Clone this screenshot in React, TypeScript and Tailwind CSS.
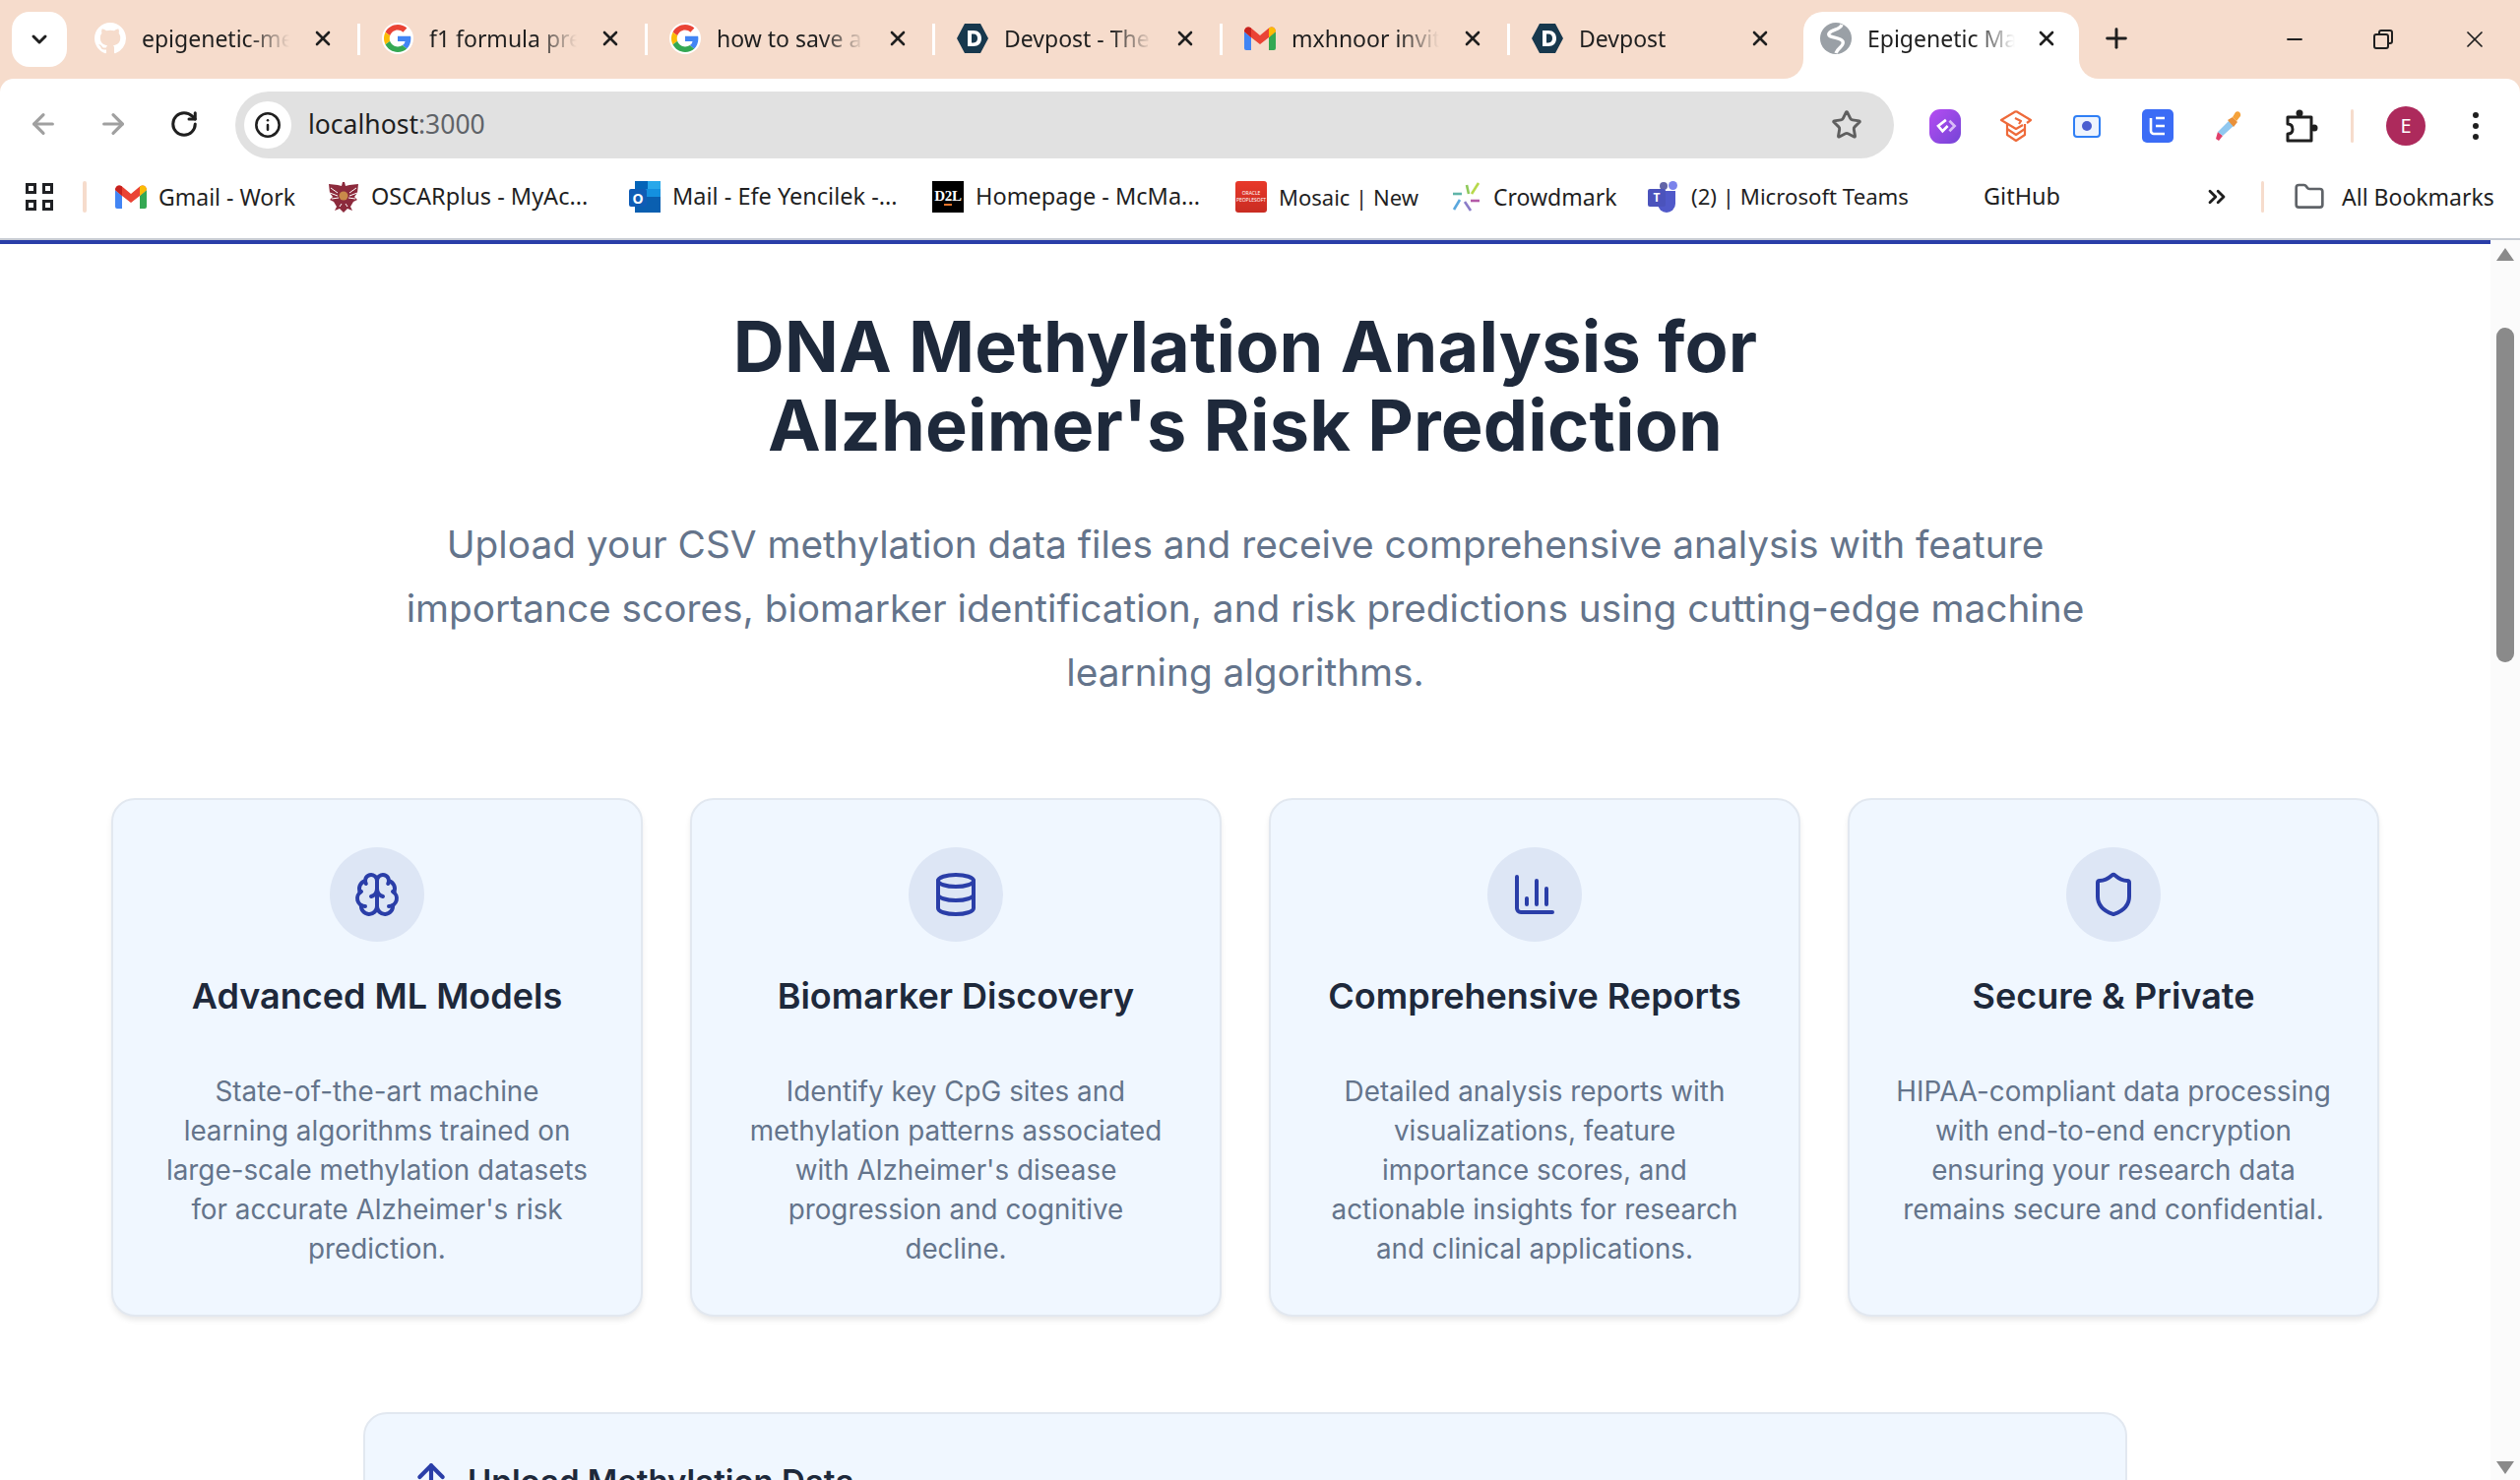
import React from "react";
import { Brain, Database, BarChart3, Shield, ArrowUp, ArrowLeft, ArrowRight, RotateCw, Info, Star, X, Plus, Minus, ChevronDown, ChevronsRight, Folder } from "lucide-react";

const chrome = { fontFamily: '"Noto Sans", sans-serif' };

function GitHubMark() {
  return (
    <svg viewBox="0 0 16 16" className="w-8 h-8" fill="#ffffff">
      <path d="M8 0C3.58 0 0 3.58 0 8c0 3.54 2.29 6.53 5.47 7.59.4.07.55-.17.55-.38 0-.19-.01-.82-.01-1.49-2.01.37-2.53-.49-2.69-.94-.09-.23-.48-.94-.82-1.13-.28-.15-.68-.52-.01-.53.63-.01 1.08.58 1.23.82.72 1.21 1.87.87 2.33.66.07-.52.28-.87.51-1.07-1.78-.2-3.64-.89-3.64-3.95 0-.87.31-1.59.82-2.15-.08-.2-.36-1.02.08-2.12 0 0 .67-.21 2.2.82.64-.18 1.32-.27 2-.27s1.36.09 2 .27c1.53-1.04 2.2-.82 2.2-.82.44 1.1.16 1.92.08 2.12.51.56.82 1.27.82 2.15 0 3.07-1.87 3.75-3.65 3.95.29.25.54.73.54 1.48 0 1.07-.01 1.93-.01 2.2 0 .21.15.46.55.38A8.01 8.01 0 0 0 16 8c0-4.42-3.58-8-8-8z" />
    </svg>
  );
}

function GoogleG() {
  return (
    <div className="w-8 h-8 rounded-full bg-white flex items-center justify-center">
      <svg viewBox="0 0 48 48" className="w-7 h-7">
        <path fill="#EA4335" d="M24 9.5c3.5 0 6.7 1.2 9.2 3.6l6.9-6.9C35.9 2.4 30.4 0 24 0 14.6 0 6.5 5.4 2.6 13.2l8 6.2C12.5 13.6 17.8 9.5 24 9.5z" />
        <path fill="#4285F4" d="M46.9 24.5c0-1.6-.1-3.1-.4-4.5H24v9h12.9c-.6 3-2.2 5.5-4.7 7.2l7.7 6c4.5-4.2 7-10.3 7-17.7z" />
        <path fill="#FBBC05" d="M10.6 28.6c-.5-1.4-.8-3-.8-4.6s.3-3.2.8-4.6l-8-6.2C.9 16.5 0 20.1 0 24s.9 7.5 2.6 10.8l8-6.2z" />
        <path fill="#34A853" d="M24 48c6.5 0 11.9-2.1 15.9-5.8l-7.7-6c-2.1 1.4-4.9 2.3-8.2 2.3-6.2 0-11.5-4.2-13.4-9.8l-8 6.2C6.5 42.6 14.6 48 24 48z" />
      </svg>
    </div>
  );
}

function DevpostIcon() {
  return (
    <svg viewBox="0 0 32 32" className="w-8 h-8">
      <path fill="#17384d" d="M8 1h16l8 15-8 15H8L0 16z" />
      <path fill="#ffffff" d="M11 8h6c5 0 8 3 8 8s-3 8-8 8h-6zm4 3.6v8.8h2c2.6 0 4-1.700 4-4.400s-1.400-4.400-4-4.400z" />
    </svg>
  );
}

function GmailIcon() {
  return (
    <svg viewBox="0 0 32 24" className="w-8 h-6">
      <path fill="#4285F4" d="M0 5v17a2 2 0 0 0 2 2h5V11z" />
      <path fill="#34A853" d="M32 5v17a2 2 0 0 1-2 2h-5V11z" />
      <path fill="#EA4335" d="M0 5c0-4 4-6 7-3.5L16 9l9-7.5C28-1 32 1 32 5l-7 6-9 7-9-7z" />
      <path fill="#C5221F" d="M0 5c0-4 4-6 7-3.5V11z" />
      <path fill="#FBBC04" d="M32 5c0-4-4-6-7-3.5V11z" />
    </svg>
  );
}

function DefaultFavicon() {
  return (
    <svg viewBox="0 0 32 32" className="w-8 h-8 shrink-0">
      <circle cx="16" cy="16" r="16" fill="#9aa0a6" />
      <path d="M22 2C20 8 12 6 9 11c-2 5 11 3 14 8 2 5-5 6-7 12" fill="none" stroke="#ffffff" strokeWidth="3.4" />
    </svg>
  );
}

function Tab({ icon, title, sep = true }: { icon: React.ReactNode; title: string; sep?: boolean }) {
  return (
    <div className="flex items-center w-[292px] h-[68px] pb-[14px] relative shrink-0">
      <div className="w-8 h-8 ml-[16px] flex items-center justify-center shrink-0">{icon}</div>
      <span className="ml-[16px] w-[150px] whitespace-nowrap overflow-hidden text-[23px] text-[#1f1f1f] [mask-image:linear-gradient(to_right,black_72%,transparent)]">{title}</span>
      <X className="absolute left-[236px] w-6 h-6 text-[#1f1f1f]" strokeWidth={2.6} />
      {sep && <div className="absolute right-[6px] top-[12px] w-[3px] h-[32px] bg-white" />}
    </div>
  );
}

function TabStrip() {
  return (
    <div className="h-[80px] bg-[#f6dccc] flex items-end relative shrink-0">
      <div className="absolute left-[12px] top-[12px] w-[56px] h-[56px] rounded-[18px] bg-white flex items-center justify-center">
        <ChevronDown className="w-6 h-6 text-[#1f1f1f]" strokeWidth={3} />
      </div>
      <div className="flex items-start h-[68px] pl-[80px]">
        <Tab icon={<GitHubMark />} title="epigenetic-methylation" />
        <Tab icon={<GoogleG />} title="f1 formula prediction" />
        <Tab icon={<GoogleG />} title="how to save a file" />
        <Tab icon={<DevpostIcon />} title="Devpost - The home" />
        <Tab icon={<GmailIcon />} title="mxhnoor invited you" />
        <Tab icon={<DevpostIcon />} title="Devpost" sep={false} />
        <div className="w-[280px] h-[68px] bg-white rounded-t-[20px] relative flex items-center pb-[14px] shrink-0">
          <div className="absolute -left-[20px] bottom-0 w-5 h-5 bg-white"><div className="w-full h-full bg-[#f6dccc] rounded-br-[20px]" /></div>
          <div className="absolute -right-[20px] bottom-0 w-5 h-5 bg-white"><div className="w-full h-full bg-[#f6dccc] rounded-bl-[20px]" /></div>
          <div className="ml-[17px]"><DefaultFavicon /></div>
          <span className="ml-[16px] w-[150px] whitespace-nowrap overflow-hidden text-[23px] text-[#1f1f1f] [mask-image:linear-gradient(to_right,black_72%,transparent)]">Epigenetic Marker</span>
          <X className="absolute left-[235px] w-6 h-6 text-[#1f1f1f]" strokeWidth={2.6} />
        </div>
        <Plus className="ml-[22px] mt-[11px] w-8 h-8 text-[#1f1f1f]" strokeWidth={2.2} />
      </div>
      <div className="absolute left-[2319px] top-0 h-[80px] flex items-center">
        <Minus className="w-6 h-6 text-[#1f1f1f]" strokeWidth={1.8} />
        <div className="relative w-5 h-5 ml-[68px]">
          <div className="absolute left-[5px] top-0 w-[15px] h-[15px] border-[2px] border-[#1f1f1f] rounded-[3px]" />
          <div className="absolute left-0 top-[4px] w-[16px] h-[16px] border-[2px] border-[#1f1f1f] rounded-[3px] bg-[#f6dccc]" />
        </div>
        <X className="w-7 h-7 text-[#1f1f1f] ml-[69px]" strokeWidth={1.5} />
      </div>
    </div>
  );
}

function Toolbar() {
  return (
    <div className="h-[81px] bg-white flex items-center shrink-0 relative rounded-t-[14px]">
      <ArrowLeft className="ml-[28px] mt-[11px] w-8 h-8 text-[#a0a0a0]" strokeWidth={2.4} />
      <ArrowRight className="ml-[39px] mt-[11px] w-8 h-8 text-[#a0a0a0]" strokeWidth={2.4} />
      <RotateCw className="ml-[41px] mt-[11px] w-[30px] h-[30px] text-[#1f1f1f]" strokeWidth={2.4} />
      <div className="ml-[37px] w-[1685px] h-[68px] rounded-[34px] bg-[#e1e1e1] flex items-center mt-[12px] relative">
        <div className="ml-[9px] w-[48px] h-[48px] rounded-full bg-white flex items-center justify-center">
          <Info className="w-7 h-7 text-[#1f1f1f]" strokeWidth={2.2} />
        </div>
        <span className="ml-[17px] text-[26.5px] text-[#1f1f1f]">localhost<span className="text-[#5f6368]">:3000</span></span>
        <Star className="absolute right-[32px] w-8 h-8 text-[#5f5f5f]" strokeWidth={2.2} />
      </div>
      <div className="absolute left-[1960px] top-[14px] h-[68px] w-[600px] flex items-center">
        <div className="absolute left-0 w-8 h-[35px] rounded-[11px] bg-gradient-to-br from-[#b64cf2] to-[#7444d6] flex items-center justify-center">
          <svg viewBox="0 0 32 32" className="w-7 h-7" fill="none" strokeWidth={3}>
            <path d="M17 9l-9 7 5 6 6-6" stroke="#ffffff" />
            <path d="M21 10l6 6-6 6" stroke="#d8bdf7" />
          </svg>
        </div>
        <svg viewBox="0 0 34 32" className="absolute left-[71px] w-[34px] h-8" fill="none" stroke="#ee6a3a" strokeWidth={2.2} strokeLinejoin="round">
          <path d="M17 1L32 10l-4 3M17 1L2 10l15 9 7-4" />
          <path d="M8 14v11l9 6 9-6V14" />
          <path d="M8 19l9 6 9-6M16 8l6 3-2 3" />
        </svg>
        <div className="absolute left-[146px] w-[28px] h-[23px] rounded-[4px] border-[2.5px] border-[#2f7ff5] bg-[#eef4fe] flex items-center justify-center">
          <div className="w-[10px] h-[10px] rounded-full bg-[#4a5ed0]" />
        </div>
        <div className="absolute left-[216px] w-8 h-[34px] rounded-[5px] bg-[#3b6cf6] flex items-center justify-center">
          <svg viewBox="0 0 32 34" className="w-8 h-[34px]" fill="none" stroke="#ffffff" strokeWidth={2.6}>
            <path d="M9 9v13a3 3 0 0 0 3 3h11" />
            <path d="M14 9h9M14 17h9" />
          </svg>
        </div>
        <svg viewBox="0 0 26 30" className="absolute left-[291px] w-[26px] h-[30px]">
          <path d="M0 28l2-7 5 4-4 5z" fill="#e0406a" />
          <path d="M2 21L14 9l5 5L7 25z" fill="#90c8f0" />
          <path d="M12 9l5-3 5 5-4 5z" fill="#e8903a" />
          <path d="M17 6l3-5c3-2 6 1 5 4l-4 5z" fill="#f5a23a" />
        </svg>
        <svg viewBox="0 0 34 36" className="absolute left-[361px] w-[34px] h-[36px]" fill="none" stroke="#1f1f1f" strokeWidth={3} strokeLinejoin="round">
          <path d="M3 9h24v9c0 0 0 6 0 6v9H3v-7c4 0 5-2 5-4.5S7 16 3 16z" />
          <circle cx="15" cy="5" r="3.5" fill="#1f1f1f" stroke="none" />
          <circle cx="30" cy="20" r="3.5" fill="#1f1f1f" stroke="none" />
        </svg>
        <div className="absolute left-[428px] w-[3px] h-[34px] rounded-full bg-[#f6dccc]" />
        <div className="absolute left-[464px] w-[40px] h-[40px] rounded-full bg-[#ad2a5c] text-white text-[20px] flex items-center justify-center">E</div>
        <div className="absolute left-[552px] flex flex-col gap-[5px]">
          <div className="w-[6px] h-[6px] rounded-full bg-[#1f1f1f]" />
          <div className="w-[6px] h-[6px] rounded-full bg-[#1f1f1f]" />
          <div className="w-[6px] h-[6px] rounded-full bg-[#1f1f1f]" />
        </div>
      </div>
    </div>
  );
}

function Bookmark({ icon, label, ml, w, size }: { icon: React.ReactNode; label: string; ml: number; w: number; size: string }) {
  return (
    <div className="flex items-center shrink-0" style={{ marginLeft: ml }}>
      <div className="w-8 h-8 flex items-center justify-center mr-[12px]">{icon}</div>
      <span className={`${size} text-[#1f1f1f] whitespace-nowrap`} style={{ width: w }}>{label}</span>
    </div>
  );
}

function GridIcon() {
  return (
    <div className="ml-[26px] w-[28px] h-[28px] grid grid-cols-2 gap-[6px]">
      <div className="border-[3px] border-[#202124]" />
      <div className="border-[3px] border-[#202124]" />
      <div className="border-[3px] border-[#202124]" />
      <div className="border-[3px] border-[#202124]" />
    </div>
  );
}

function BookmarksBar() {
  return (
    <div className="h-[81px] pb-[3px] bg-white flex items-center shrink-0 relative">
      <GridIcon />
      <div className="ml-[30px] w-[4px] h-[32px] rounded-full bg-[#f6dccc]" />
      <Bookmark ml={29} w={140} size="text-[23px]" icon={<GmailIcon />} label="Gmail - Work" />
      <Bookmark ml={32} w={220} size="text-[23.5px]" icon={
        <svg viewBox="0 0 32 32" className="w-8 h-8">
          <path fill="#8c2a3c" d="M15 1h2l1 4 4-1 9-1-1 9-3 4 3 3-4 2-3 5 2 4-5-2-4 4-4-4-5 2 2-4-3-5-4-2 3-3-3-4-1-9 9 1 4 1z" />
          <path stroke="#ffffff" strokeWidth="1" d="M3 7l7 5M2 12l8 3M4 18l7-1M29 7l-7 5M30 12l-8 3M28 18l-7-1M12 26l2-3M20 26l-2-3" />
          <circle cx="16" cy="15" r="4.5" fill="#c98a4a" />
        </svg>
      } label="OSCARplus - MyAc..." />
      <Bookmark ml={42} w={225} size="text-[23.5px]" icon={
        <div className="relative w-8 h-8">
          <div className="absolute left-[6px] top-0 w-[26px] h-[16px] bg-[#1490df]" />
          <div className="absolute left-[6px] top-0 w-[13px] h-[8px] bg-[#0364b8]" />
          <div className="absolute left-[19px] top-0 w-[13px] h-[8px] bg-[#28a8ea]" />
          <div className="absolute left-[6px] top-[16px] w-[26px] h-[16px] bg-[#0a5fb0]" />
          <div className="absolute left-0 top-[8px] w-[18px] h-[18px] rounded-[2px] bg-[#0f5cb5] text-white text-[14px] font-bold flex items-center justify-center">O</div>
        </div>
      } label="Mail - Efe Yencilek -..." />
      <Bookmark ml={39} w={226} size="text-[23.5px]" icon={
        <div className="w-8 h-8 bg-black text-white flex flex-col items-center justify-center relative" style={{ fontFamily: '"Liberation Serif", serif' }}>
          <span className="text-[15px] leading-[16px] font-bold tracking-[-0.02em]">D2L</span>
          <div className="w-[8px] h-[2px] bg-[#e8762c]" />
        </div>
      } label="Homepage - McMa..." />
      <Bookmark ml={38} w={141} size="text-[22px]" icon={
        <div className="w-8 h-8 rounded-[3px] bg-gradient-to-b from-[#e8392a] to-[#c92c22] flex flex-col items-center justify-center text-white text-[5px] leading-[7px]">
          <span>ORACLE</span><span>PEOPLESOFT</span>
        </div>
      } label="Mosaic | New" />
      <Bookmark ml={33} w={124} size="text-[23px]" icon={
        <svg viewBox="0 0 32 32" className="w-8 h-8" fill="none" strokeWidth={2.6}>
          <path d="M17 4l2 9" stroke="#8fc95a" /><path d="M29 2l-7 11" stroke="#b7d84a" /><path d="M3 13h9" stroke="#5fb4a8" />
          <path d="M10 19L4 29" stroke="#5aa7dd" /><path d="M15 21l6 9" stroke="#8a7cc8" /><path d="M21 20h9" stroke="#b45aa8" />
        </svg>
      } label="Crowdmark" />
      <Bookmark ml={33} w={222} size="text-[22.2px]" icon={
        <div className="relative w-8 h-8">
          <div className="absolute right-[2px] top-0 w-[9px] h-[9px] rounded-full bg-[#7b83eb]" />
          <div className="absolute left-[12px] top-[1px] w-[8px] h-[8px] rounded-full bg-[#6264a7]" />
          <div className="absolute left-[10px] top-[10px] w-[18px] h-[22px] rounded-b-[9px] bg-[#5059c9]" />
          <div className="absolute left-0 top-[8px] w-[18px] h-[18px] rounded-[2px] bg-[#4b53bc] text-white text-[12px] font-bold flex items-center justify-center">T</div>
        </div>
      } label="(2) | Microsoft Teams" />
      <span className="ml-[75px] text-[23.5px] text-[#1f1f1f]">GitHub</span>
      <ChevronsRight className="absolute left-[2238px] w-7 h-7 text-[#1f1f1f]" strokeWidth={2.4} />
      <div className="absolute left-[2297px] w-[3px] h-[32px] rounded-full bg-[#f6dccc]" />
      <Folder className="absolute left-[2330px] w-8 h-8 text-[#5f6368]" strokeWidth={2} />
      <span className="absolute left-[2379px] text-[23px] text-[#1f1f1f] whitespace-nowrap">All Bookmarks</span>
    </div>
  );
}

const features = [
  { icon: Brain, title: "Advanced ML Models", lines: ["State-of-the-art machine", "learning algorithms trained on", "large-scale methylation datasets", "for accurate Alzheimer's risk", "prediction."] },
  { icon: Database, title: "Biomarker Discovery", lines: ["Identify key CpG sites and", "methylation patterns associated", "with Alzheimer's disease", "progression and cognitive", "decline."] },
  { icon: BarChart3, title: "Comprehensive Reports", lines: ["Detailed analysis reports with", "visualizations, feature", "importance scores, and", "actionable insights for research", "and clinical applications."] },
  { icon: Shield, title: "Secure & Private", lines: ["HIPAA-compliant data processing", "with end-to-end encryption", "ensuring your research data", "remains secure and confidential."] },
];

function Scrollbar() {
  return (
    <div className="w-[30px] bg-[#fbfbfb] relative shrink-0 flex flex-col items-center h-full">
      <div className="mt-[8px] w-0 h-0 border-l-[9px] border-r-[9px] border-b-[13px] border-l-transparent border-r-transparent border-b-[#8a8a8a]" />
      <div className="mt-[68px] w-[18px] h-[340px] rounded-full bg-[#8a8a8a]" />
      <div className="absolute bottom-[6px] w-0 h-0 border-l-[9px] border-r-[9px] border-t-[13px] border-l-transparent border-r-transparent border-t-[#8a8a8a]" />
    </div>
  );
}

export default function App() {
  return (
    <div className="w-[2560px] h-[1504px] overflow-hidden flex flex-col bg-[#f6dccc]" style={chrome}>
      <TabStrip />
      <Toolbar />
      <BookmarksBar />
      <div className="h-[2px] bg-[#c8ccd4] shrink-0" />
      <div className="flex-1 flex min-h-0 bg-white">
        <main className="flex-1 min-w-0 overflow-hidden border-t-[4px] border-[#2a3ea8]" style={{ fontFamily: 'Inter, sans-serif' }}>
          <div className="flex flex-col items-center pt-[64px]">
            <h1 className="text-[72px] leading-[80px] font-bold text-[#1e293b] text-center tracking-[0.002em]">
              DNA Methylation Analysis for<br />Alzheimer's Risk Prediction
            </h1>
            <p className="mt-[48px] w-[1728px] text-[38.8px] leading-[65px] text-[#64748b] text-center">
              Upload your CSV methylation data files and receive comprehensive analysis with feature importance scores, biomarker identification, and risk predictions using cutting-edge machine learning algorithms.
            </p>
            <div className="mt-[96px] grid grid-cols-4 gap-[48px] w-[2304px]">
              {features.map((f) => {
                const Icon = f.icon;
                return (
                  <div key={f.title} className="h-[527px] rounded-[24px] border-2 border-[#e2e8f0] bg-[#f0f7ff] shadow-[0_4px_6px_-1px_rgba(0,0,0,0.1)] pt-[48px] flex flex-col items-center">
                    <div className="w-[96px] h-[96px] rounded-full bg-[#dde6f5] flex items-center justify-center">
                      <Icon className="w-12 h-12 text-[#2a3ea8]" strokeWidth={2} />
                    </div>
                    <h3 className="mt-[27px] text-[36px] leading-[56px] font-semibold text-[#1e293b] whitespace-nowrap">{f.title}</h3>
                    <p className="mt-[49px] text-[27.8px] leading-[40px] text-[#64748b] text-center whitespace-nowrap">
                      {f.lines.map((l) => <span key={l} className="block">{l}</span>)}
                    </p>
                  </div>
                );
              })}
            </div>
            <div className="mt-[97px] w-[1792px] h-[400px] shrink-0 rounded-[24px] border-2 border-[#e2e8f0] bg-[#f0f7ff] pl-[47px] pt-[44px] flex items-start">
              <ArrowUp className="w-10 h-10 text-[#2a3ea8]" strokeWidth={2.5} />
              <span className="ml-[17px] text-[33px] leading-[48px] font-semibold text-[#1e293b]">Upload Methylation Data</span>
            </div>
          </div>
        </main>
        <Scrollbar />
      </div>
    </div>
  );
}
